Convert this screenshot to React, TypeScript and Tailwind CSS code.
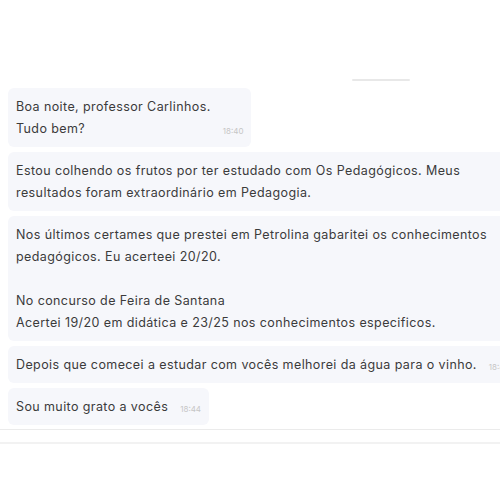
import { ReactNode } from 'react';
import clsx from 'clsx';

interface BubbleProps {
  children: ReactNode;
  time: string;
  wide?: boolean;
}

function Bubble({ children, time, wide }: BubbleProps) {
  return (
    <div
      className={clsx(
        'flex items-end gap-3 rounded-md bg-[#f6f7fb] pl-2 pr-[8px] pt-2 pb-[7px]',
        wide ? 'w-[540px] justify-between' : 'w-max'
      )}
    >
      <p className="whitespace-nowrap text-[12.5px] leading-[22px] tracking-[0.4px] text-[#3b3b3b]">
        {children}
      </p>
      <span className="mb-[3px] text-[8px] leading-[12px] text-[#c6c6c6]">{time}</span>
    </div>
  );
}

export default function App() {
  return (
    <div
      className="h-[500px] w-[500px] overflow-hidden bg-white"
      style={{ fontFamily: 'Inter, "Noto Sans", sans-serif' }}
    >
      <div className="pl-[352px] pt-[79px]">
        <div className="h-[2px] w-[58px] rounded-full bg-[#e8e8e8]" />
      </div>

      <div className="flex flex-col items-start gap-[5px] pl-2 pt-[7px]">
        <Bubble time="18:40">
          Boa noite, professor Carlinhos.
          <br />
          Tudo bem?
        </Bubble>
        <Bubble time="18:41" wide>
          Estou colhendo os frutos por ter estudado com Os Pedagógicos. Meus
          <br />
          resultados foram extraordinário em Pedagogia.
        </Bubble>
        <Bubble time="18:42" wide>
          Nos últimos certames que prestei em Petrolina gabaritei os conhecimentos
          <br />
          pedagógicos. Eu acerteei 20/20.
          <br />
          <br />
          No concurso de Feira de Santana
          <br />
          Acertei 19/20 em didática e 23/25 nos conhecimentos especificos.
        </Bubble>
        <Bubble time="18:43">
          Depois que comecei a estudar com vocês melhorei da água para o vinho.
        </Bubble>
        <Bubble time="18:44">Sou muito grato a vocês</Bubble>
      </div>

      <div className="mt-[4px] h-px w-full bg-[#ebebeb]" />
      <div className="mt-[12px] h-[2px] w-full bg-[#f2f2f2]" />
    </div>
  );
}
